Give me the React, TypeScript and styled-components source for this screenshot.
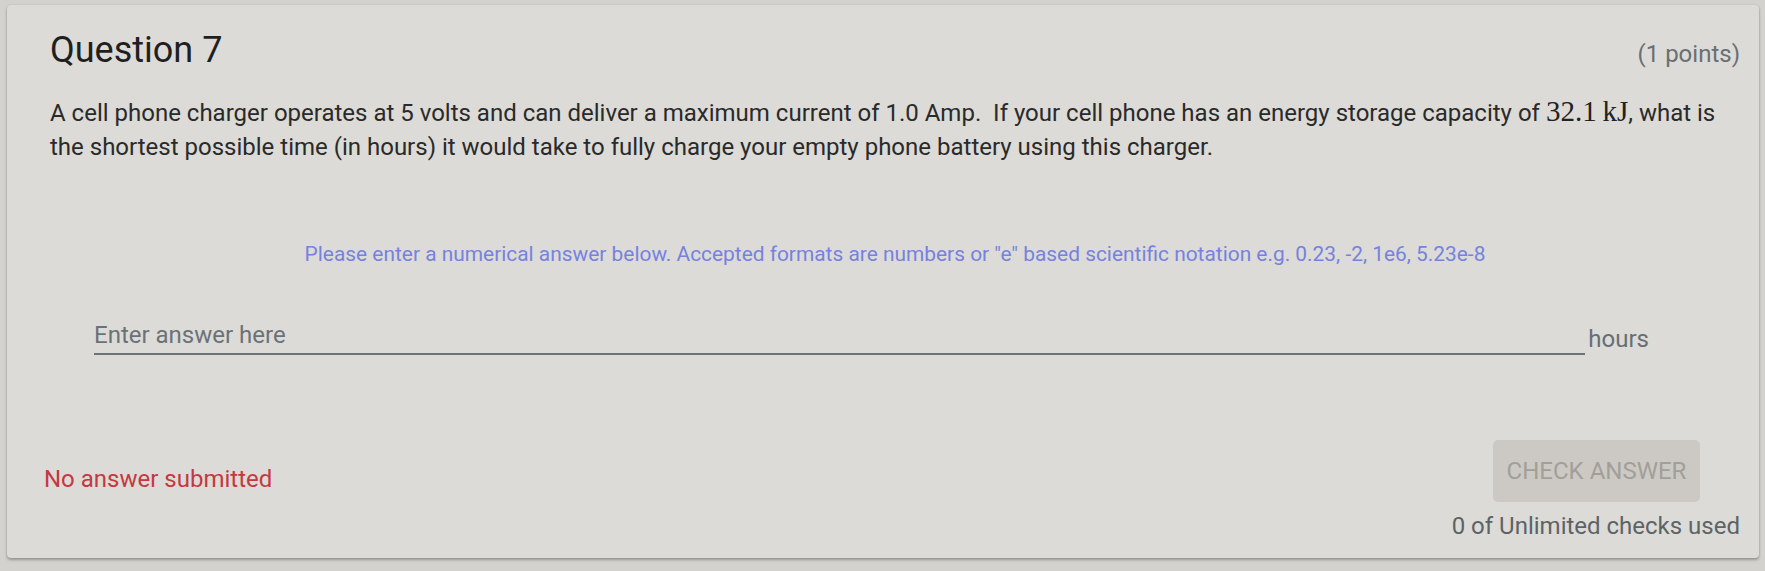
import React from "react";
import styled, { createGlobalStyle } from "styled-components";

const Global = createGlobalStyle`
  html, body {
    margin: 0;
    padding: 0;
    background: #d3d2ce;
    font-family: Roboto, "Noto Sans", "Liberation Sans", sans-serif;
  }
  * { box-sizing: border-box; }
`;

const Page = styled.div`
  padding: 5px 6px 12px 7px;
`;

const Card = styled.section`
  background: #dcdbd7;
  border-radius: 4px;
  box-shadow: 0 2px 3px rgba(0, 0, 0, 0.28), 0 0 2px rgba(0, 0, 0, 0.12);
  padding: 24px 19px 18px 43px;
`;

const Header = styled.header`
  display: flex;
  justify-content: space-between;
  align-items: baseline;
`;

const Title = styled.h2`
  margin: 0;
  font-size: 36px;
  line-height: 43px;
  font-weight: 400;
  color: #1f1f1f;
`;

const Points = styled.span`
  font-size: 24px;
  line-height: 28px;
  color: #6a6f73;
`;

const Body = styled.p`
  margin: 25px 0 0;
  font-size: 24px;
  line-height: 33.5px;
  color: #2a2a2a;
`;

const Math = styled.span`
  font-family: "Liberation Serif", "DejaVu Serif", serif;
  font-size: 29px;
  line-height: 1;
  color: #222;
`;

const Hint = styled.p`
  margin: 74.5px 0 0;
  text-align: center;
  font-size: 20.9px;
  line-height: 30px;
  color: #7682e0;
`;

const AnswerRow = styled.div`
  display: flex;
  align-items: flex-end;
  margin-top: 48.75px;
  padding: 0 91px 0 44px;
`;

const AnswerInput = styled.input`
  flex: 1;
  min-width: 0;
  background: transparent;
  border: none;
  border-bottom: 2px solid #6c7378;
  padding: 4px 0 4px;
  font-family: inherit;
  font-size: 24px;
  line-height: 28px;
  height: 38px;
  color: #2a2a2a;
  outline: none;
  &::placeholder {
    color: #6b7277;
    opacity: 1;
  }
`;

const UnitLabel = styled.span`
  margin: 0 0 2px 3px;
  font-size: 24px;
  line-height: 28px;
  color: #676e73;
`;

const Footer = styled.div`
  display: flex;
  justify-content: space-between;
  align-items: flex-start;
  margin-top: 85px;
`;

const Status = styled.span`
  margin-top: 25px;
  margin-left: -6px;
  font-size: 24px;
  line-height: 28px;
  color: #c3393f;
`;

const Actions = styled.div`
  display: flex;
  flex-direction: column;
  align-items: flex-end;
`;

const CheckButton = styled.button`
  width: 207px;
  height: 62px;
  margin-right: 40px;
  border: none;
  border-radius: 5px;
  background: #ccc9c4;
  color: #a29f99;
  font-family: inherit;
  font-size: 24px;
  font-weight: 400;
  text-transform: uppercase;
  cursor: default;
`;

const Checks = styled.span`
  margin-top: 10px;
  font-size: 24px;
  line-height: 28px;
  color: #5c6367;
`;

export default function App() {
  return (
    <>
      <Global />
      <Page>
        <Card>
          <Header>
            <Title>Question 7</Title>
            <Points>(1 points)</Points>
          </Header>
          <Body>
            A cell phone charger operates at 5 volts and can deliver a maximum current of 1.0 Amp.&nbsp; If your
            cell phone has an energy storage capacity of <Math>32.1&#8201;kJ</Math>, what is the shortest possible
            time (in hours) it would take to fully charge your empty phone battery using this charger.
          </Body>
          <Hint>
            Please enter a numerical answer below. Accepted formats are numbers or "e" based scientific notation
            e.g. 0.23, -2, 1e6, 5.23e-8
          </Hint>
          <AnswerRow>
            <AnswerInput placeholder="Enter answer here" />
            <UnitLabel>hours</UnitLabel>
          </AnswerRow>
          <Footer>
            <Status>No answer submitted</Status>
            <Actions>
              <CheckButton disabled>Check Answer</CheckButton>
              <Checks>0 of Unlimited checks used</Checks>
            </Actions>
          </Footer>
        </Card>
      </Page>
    </>
  );
}
